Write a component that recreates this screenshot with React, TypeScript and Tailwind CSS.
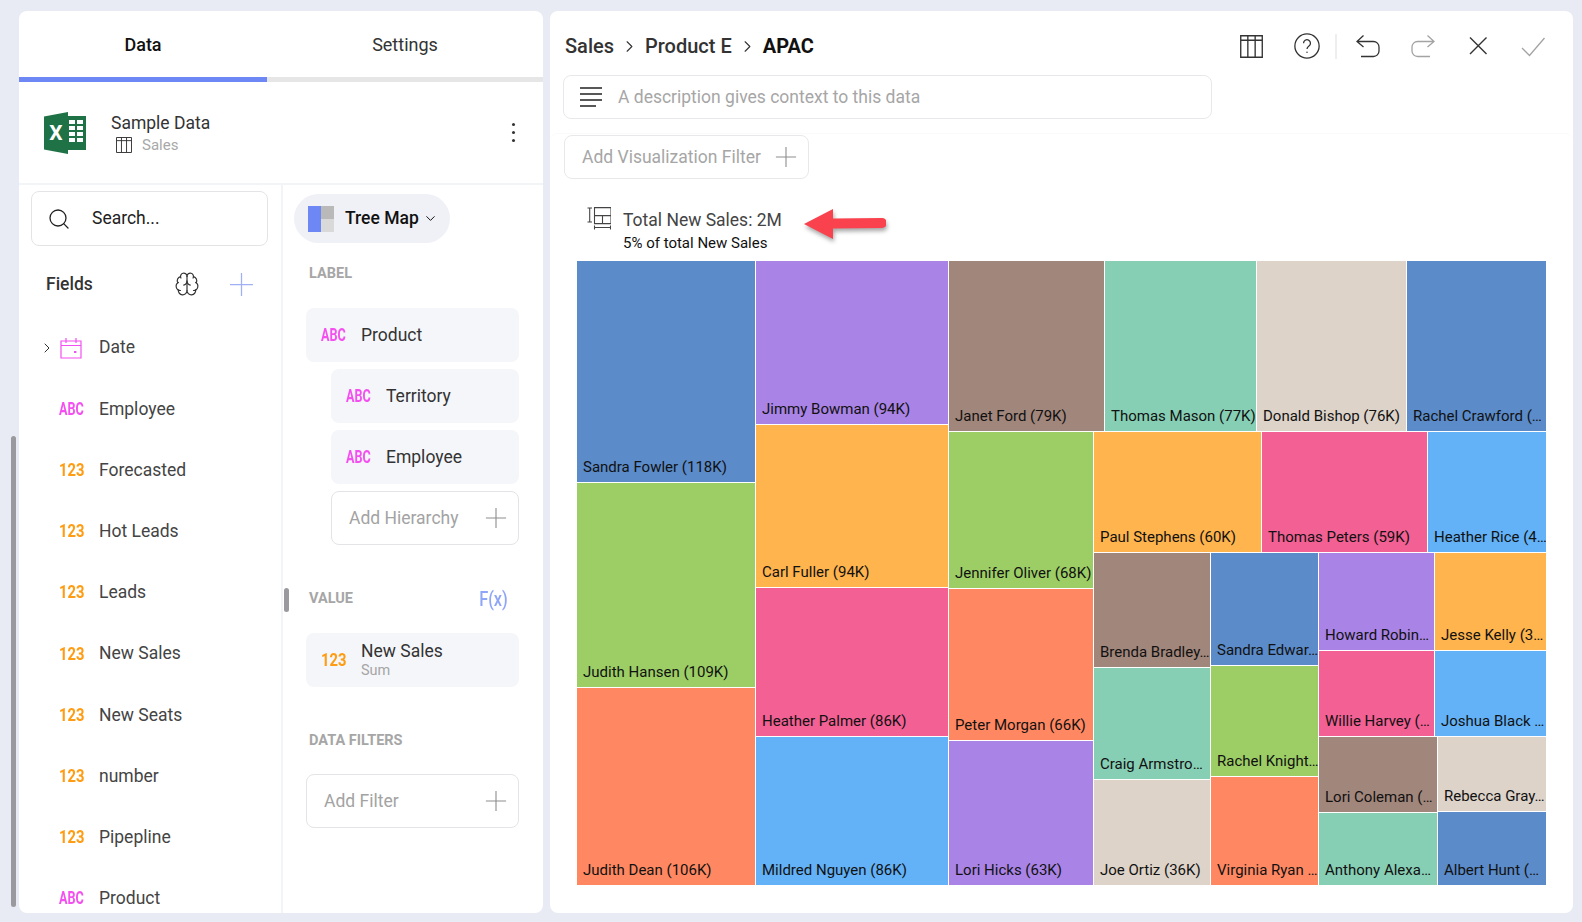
import type { ReactNode } from 'react'
import { Brain, ChevronDown, ChevronRight, Search } from 'lucide-react'

const Thin = ({ className = '' }: { className?: string }) => (
  <svg viewBox="0 0 24 24" fill="none" stroke="currentColor" strokeWidth="1.2" className={className}>
    <path d="M12 1v22M1 12h22" />
  </svg>
)

const TableIcon = ({ className = '' }: { className?: string }) => (
  <svg viewBox="0 0 22 22" fill="none" stroke="currentColor" strokeWidth="1.3" className={className}>
    <path d="M.7.7h20.6v20.6H.7zM.7 5h20.6M7.5.7v20.6M14.5.7v20.6" />
  </svg>
)

const ExcelLogo = () => (
  <svg viewBox="0 0 42 42" className="w-[42px] h-[42px] shrink-0">
    <rect x="20" y="4" width="22" height="34" fill="#1f7246" />
    <path d="M25 8h6v4h-6zM33 8h6v4h-6zM25 14h6v4h-6zM33 14h6v4h-6zM25 20h6v4h-6zM33 20h6v4h-6zM25 26h6v4h-6zM33 26h6v4h-6z" fill="#fff" />
    <path d="M0 4.5 24 0v42L0 37.5z" fill="#1f7246" />
    <text x="12" y="28" textAnchor="middle" fontSize="21" fontWeight="700" fontFamily="Roboto" fill="#fff">X</text>
  </svg>
)

const Badge = ({ kind }: { kind: 'abc' | 'num' }) => (
  <span className={`inline-block w-[26px] text-[18px] leading-none font-bold origin-left whitespace-nowrap ${kind === 'abc' ? 'text-[#f44ff0] scale-x-[0.7]' : 'text-[#ff9c12] scale-x-[0.82]'}`}>
    {kind === 'abc' ? 'ABC' : '123'}
  </span>
)

const fields: { name: string; kind: 'abc' | 'num' }[] = [
  { name: 'Employee', kind: 'abc' },
  { name: 'Forecasted', kind: 'num' },
  { name: 'Hot Leads', kind: 'num' },
  { name: 'Leads', kind: 'num' },
  { name: 'New Sales', kind: 'num' },
  { name: 'New Seats', kind: 'num' },
  { name: 'number', kind: 'num' },
  { name: 'Pipepline', kind: 'num' },
  { name: 'Product', kind: 'abc' },
]

const Pill = ({ name, kind, sub, className }: { name: string; kind: 'abc' | 'num'; sub?: string; className: string }) => (
  <div className={`flex items-center h-[54px] bg-[#f5f6fa] rounded-lg pl-[15px] ${className}`}>
    <Badge kind={kind} />
    <div className="ml-[14px]">
      <div className="text-[17.5px] leading-[21px] text-[#333]">{name}</div>
      {sub && <div className="text-[14.5px] leading-[17px] text-[#a5a5a5]">{sub}</div>}
    </div>
  </div>
)

const AddBox = ({ label, className }: { label: string; className: string }) => (
  <div className={`flex items-center justify-between h-[54px] border border-[#e4e4e6] rounded-lg pl-[17px] pr-[11px] text-[17.5px] text-[#a3a3a3] ${className}`}>
    {label}
    <Thin className="w-[22px] h-[22px] text-[#8d8d8d]" />
  </div>
)

const SectionLabel = ({ children, className = '' }: { children: ReactNode; className?: string }) => (
  <div className={`h-[18px] leading-[18px] text-[14.5px] font-bold text-[#a6a6a6] ${className}`}>{children}</div>
)

const Cell = ({ label, className }: { label: string; className: string }) => (
  <div className={`flex items-end min-h-0 min-w-0 overflow-hidden pl-[6px] pb-[5px] text-[15px] leading-[19px] whitespace-nowrap text-[#111] ${className}`}>
    {label}
  </div>
)

const blue = 'bg-[#5b8bc9]'
const purple = 'bg-[#a984e6]'
const brown = 'bg-[#a1867b]'
const teal = 'bg-[#87cfb4]'
const beige = 'bg-[#ddd3c8]'
const orange = 'bg-[#ffb44d]'
const pink = 'bg-[#f26094]'
const green = 'bg-[#9dce66]'
const coral = 'bg-[#ff8862]'
const sky = 'bg-[#63b2f7]'

const TreeMap = () => (
  <div className="flex gap-[1px] ml-[27px] mt-[9px] w-[969px] h-[624px]">
    <div className="flex flex-col gap-[1px] w-[178px]">
      <Cell label="Sandra Fowler (118K)" className={`h-[221px] ${blue}`} />
      <Cell label="Judith Hansen (109K)" className={`h-[204px] ${green}`} />
      <Cell label="Judith Dean (106K)" className={`flex-1 ${coral}`} />
    </div>
    <div className="flex flex-col gap-[1px] w-[192px]">
      <Cell label="Jimmy Bowman (94K)" className={`h-[163px] ${purple}`} />
      <Cell label="Carl Fuller (94K)" className={`h-[162px] ${orange}`} />
      <Cell label="Heather Palmer (86K)" className={`h-[148px] ${pink}`} />
      <Cell label="Mildred Nguyen (86K)" className={`flex-1 ${sky}`} />
    </div>
    <div className="flex flex-col gap-[1px] flex-1 min-w-0">
      <div className="flex gap-[1px] h-[170px]">
        <Cell label="Janet Ford (79K)" className={`w-[155px] ${brown}`} />
        <Cell label="Thomas Mason (77K)" className={`w-[151px] ${teal}`} />
        <Cell label="Donald Bishop (76K)" className={`w-[149px] ${beige}`} />
        <Cell label="Rachel Crawford (…" className={`flex-1 ${blue}`} />
      </div>
      <div className="flex gap-[1px] flex-1 min-h-0">
        <div className="flex flex-col gap-[1px] w-[144px]">
          <Cell label="Jennifer Oliver (68K)" className={`h-[156px] ${green}`} />
          <Cell label="Peter Morgan (66K)" className={`h-[151px] ${coral}`} />
          <Cell label="Lori Hicks (63K)" className={`flex-1 ${purple}`} />
        </div>
        <div className="flex flex-col gap-[1px] flex-1 min-w-0">
          <div className="flex gap-[1px] h-[120px]">
            <Cell label="Paul Stephens (60K)" className={`w-[167px] ${orange}`} />
            <Cell label="Thomas Peters (59K)" className={`w-[165px] ${pink}`} />
            <Cell label="Heather Rice (4…" className={`flex-1 ${sky}`} />
          </div>
          <div className="flex gap-[1px] flex-1 min-h-0">
            <div className="flex flex-col gap-[1px] w-[116px]">
              <Cell label="Brenda Bradley…" className={`h-[114px] ${brown}`} />
              <Cell label="Craig Armstro…" className={`h-[111px] ${teal}`} />
              <Cell label="Joe Ortiz (36K)" className={`flex-1 ${beige}`} />
            </div>
            <div className="flex flex-col gap-[1px] w-[107px]">
              <Cell label="Sandra Edwar…" className={`h-[112px] ${blue}`} />
              <Cell label="Rachel Knight…" className={`h-[110px] ${green}`} />
              <Cell label="Virginia Ryan …" className={`flex-1 ${coral}`} />
            </div>
            <div className="flex flex-col gap-[1px] flex-1 min-w-0">
              <div className="flex gap-[1px] h-[97px]">
                <Cell label="Howard Robin…" className={`w-[115px] ${purple}`} />
                <Cell label="Jesse Kelly (3…" className={`flex-1 ${orange}`} />
              </div>
              <div className="flex gap-[1px] h-[85px]">
                <Cell label="Willie Harvey (…" className={`w-[115px] ${pink}`} />
                <Cell label="Joshua Black …" className={`flex-1 ${sky}`} />
              </div>
              <div className="flex gap-[1px] flex-1 min-h-0">
                <div className="flex flex-col gap-[1px] w-[118px]">
                  <Cell label="Lori Coleman (…" className={`h-[75px] ${brown}`} />
                  <Cell label="Anthony Alexa…" className={`flex-1 ${teal}`} />
                </div>
                <div className="flex flex-col gap-[1px] flex-1 min-w-0">
                  <Cell label="Rebecca Gray…" className={`h-[74px] ${beige}`} />
                  <Cell label="Albert Hunt (…" className={`flex-1 ${blue}`} />
                </div>
              </div>
            </div>
          </div>
        </div>
      </div>
    </div>
  </div>
)

const LeftPanel = () => (
  <div className="w-[524px] h-full bg-white rounded-lg overflow-hidden flex flex-col">
    <div className="flex h-[66px] items-center text-[18px]">
      <div className="w-[248px] text-center font-medium text-[#111]">Data</div>
      <div className="flex-1 text-center text-[#333]">Settings</div>
    </div>
    <div className="flex h-[5px] bg-[#e6e6e6]">
      <div className="w-[248px] bg-[#6d87f5]" />
    </div>
    <div className="flex items-center h-[103px] border-b-2 border-[#f3f4f7] pl-[25px] pr-[28px]">
      <ExcelLogo />
      <div className="ml-[25px]">
        <div className="text-[17.5px] leading-[24px] text-[#333]">Sample Data</div>
        <div className="flex items-center text-[15px] leading-[20px] text-[#a8a8a8]">
          <TableIcon className="w-[16px] h-[16px] ml-[5px] mr-[10px] text-[#333]" />
          Sales
        </div>
      </div>
      <div className="ml-auto flex flex-col gap-[5px]">
        <span className="w-[3px] h-[3px] rounded-full bg-[#333]" />
        <span className="w-[3px] h-[3px] rounded-full bg-[#333]" />
        <span className="w-[3px] h-[3px] rounded-full bg-[#333]" />
      </div>
    </div>
    <div className="flex flex-1 min-h-0">
      <div className="w-[264px] border-r-2 border-[#f3f4f7] px-[12px] pt-[6px] overflow-hidden">
        <div className="flex items-center h-[55px] w-[237px] border border-[#e4e4e6] rounded-lg pl-[15px] text-[17.5px] text-[#222]">
          <Search className="w-[24px] h-[24px] mr-[21px]" strokeWidth={1.3} />
          Search...
        </div>
        <div className="flex items-center h-[44px] mt-[16px] pl-[15px] text-[17.5px] font-medium text-[#333]">
          Fields
          <Brain className="w-[26px] h-[26px] ml-auto text-[#333]" strokeWidth={1.1} />
          <Thin className="w-[25px] h-[25px] ml-[29px] mr-[15px] text-[#9fb0f5]" />
        </div>
        <div className="flex items-center h-[61.2px] mt-[11px] text-[17.5px] text-[#444]">
          <ChevronRight className="w-[16px] h-[16px] ml-[8px] text-[#333]" strokeWidth={1.5} />
          <svg viewBox="0 0 22 22" fill="none" stroke="#f44ff0" strokeWidth="1.2" className="w-[22px] h-[22px] ml-[5px] mr-[17px]">
            <path d="M1 4h20v17H1zM1 8.5h20M6 1v5M16 1v5" />
            <path d="M14 14h2.4v2H14z" fill="#f44ff0" stroke="none" />
          </svg>
          Date
        </div>
        {fields.map((f) => (
          <div key={f.name} className="flex items-center h-[61.2px] pl-[28px] text-[17.5px] text-[#444]">
            <Badge kind={f.kind} />
            <span className="ml-[14px]">{f.name}</span>
          </div>
        ))}
      </div>
      <div className="relative flex-1 pl-[23px] pr-[24px] pt-[9px]">
        <div className="absolute left-[1px] top-[403px] w-[5px] h-[24px] rounded-full bg-[#9a9a9e]" />
        <div className="flex items-center w-[156px] h-[49px] -ml-[12px] rounded-full bg-[#f0f1f7] pl-[14px] text-[17.5px] font-medium text-[#111]">
          <svg viewBox="0 0 26 26" className="w-[26px] h-[26px] mr-[11px]">
            <rect width="13" height="26" fill="#6d87f5" />
            <rect x="13" width="13" height="13" fill="#b9b9b9" />
            <rect x="13" y="13" width="13" height="13" fill="#d9d9d9" />
          </svg>
          Tree Map
          <ChevronDown className="w-[15px] h-[15px] ml-[4px]" strokeWidth={1.6} />
        </div>
        <SectionLabel className="mt-[22px] ml-[3px]">LABEL</SectionLabel>
        <Pill name="Product" kind="abc" className="mt-[25px]" />
        <Pill name="Territory" kind="abc" className="mt-[7px] ml-[25px]" />
        <Pill name="Employee" kind="abc" className="mt-[7px] ml-[25px]" />
        <AddBox label="Add Hierarchy" className="mt-[7px] ml-[25px]" />
        <div className="flex items-center justify-between mt-[45px] h-[18px]">
          <SectionLabel className="ml-[3px]">VALUE</SectionLabel>
          <span className="mr-[8px] text-[20px] font-medium text-[#8fa6f7] scale-x-[0.82]">F(x)</span>
        </div>
        <Pill name="New Sales" kind="num" sub="Sum" className="mt-[25px]" />
        <SectionLabel className="mt-[45px] ml-[3px]">DATA FILTERS</SectionLabel>
        <AddBox label="Add Filter" className="mt-[24px]" />
      </div>
    </div>
  </div>
)

const Toolbar = () => (
  <div className="flex items-center ml-auto text-[#333]">
    <TableIcon className="w-[23px] h-[23px]" />
    <svg viewBox="0 0 24 24" fill="none" stroke="currentColor" strokeWidth="1.2" className="w-[26px] h-[26px] ml-[31px]">
      <circle cx="12" cy="12" r="11.2" />
      <path d="M8.8 9.4a3.2 3.2 0 1 1 5 2.6c-1.2.8-1.8 1.4-1.8 2.8" />
      <circle cx="12" cy="17.8" r=".7" fill="currentColor" stroke="none" />
    </svg>
    <div className="w-[2px] h-[25px] bg-[#eeeeee] ml-[15px]" />
    <svg viewBox="0 0 24 24" fill="none" stroke="currentColor" strokeWidth="1.3" className="w-[24px] h-[24px] ml-[19px]">
      <path d="M7.5 1.5 1 7.5 7.5 13M1 7.5h16.5a5.5 5.5 0 0 1 5.5 5.5v4a5.5 5.5 0 0 1-5.5 5.5H5" />
    </svg>
    <svg viewBox="0 0 24 24" fill="none" stroke="#a3a3a3" strokeWidth="1.3" className="w-[24px] h-[24px] ml-[31px]">
      <path d="M16.5 1.5 23 7.5 16.5 13M23 7.5H6.5A5.5 5.5 0 0 0 1 13v4a5.5 5.5 0 0 0 5.5 5.5H19" />
    </svg>
    <svg viewBox="0 0 24 24" fill="none" stroke="currentColor" strokeWidth="1.4" className="w-[24px] h-[24px] ml-[31px]">
      <path d="M4 3.5 20.5 20M20.5 3.5 4 20" />
    </svg>
    <svg viewBox="0 0 24 24" fill="none" stroke="#a3a3a3" strokeWidth="1.3" className="w-[24px] h-[24px] ml-[31px]">
      <path d="M1 14l7.5 7.5L23.5 4" />
    </svg>
  </div>
)

const RightPanel = () => (
  <div className="relative w-[1023px] h-full bg-white rounded-lg overflow-hidden">
    <div className="flex items-center h-[44px] mt-[13px] pl-[15px] pr-[28px]">
      <div className="flex items-center text-[20px] font-medium text-[#333]">
        Sales
        <ChevronRight className="w-[19px] h-[19px] mx-[6px]" strokeWidth={1.4} />
        Product E
        <ChevronRight className="w-[19px] h-[19px] mx-[6px]" strokeWidth={1.4} />
        <span className="font-bold text-[#111]">APAC</span>
      </div>
      <Toolbar />
    </div>
    <div className="flex items-center w-[649px] h-[44px] ml-[13px] mt-[7px] border border-[#e8e8ea] rounded-lg pl-[16px] text-[17.5px] text-[#a6a6a6]">
      <svg viewBox="0 0 22 20" fill="none" stroke="#222" strokeWidth="1.3" className="w-[22px] h-[20px] mr-[16px]">
        <path d="M0 1h22M0 7h22M0 13h22M0 19h16" />
      </svg>
      A description gives context to this data
    </div>
    <div className="mt-[14px] pt-[1px] rounded-t-lg border-t border-[#fafafb]">
      <div className="flex items-center justify-between w-[245px] h-[44px] ml-[14px] border border-[#e8e8ea] rounded-lg pl-[17px] pr-[11px] text-[17.5px] text-[#a6a6a6]">
        Add Visualization Filter
        <Thin className="w-[22px] h-[22px] text-[#8d8d8d]" />
      </div>
      <div className="flex mt-[29px] ml-[37px] h-[44px]">
        <svg viewBox="0 0 24 25" fill="none" stroke="#444" strokeWidth="1.1" className="w-[24px] h-[25px] mr-[12px] -mt-[1px]">
          <path d="M7.5.6H24v16H7.5zM7.5 8.6H24M15.5 8.6v8M.5 1h4.5M.5 15h4.5M2.7 1v14M7.5 20.5h16M7.5 18.5v4M23.5 18.5v4" />
        </svg>
        <div>
          <div className="text-[17.5px] leading-[24px] text-[#444]">Total New Sales: 2M</div>
          <div className="text-[15px] leading-[18px] mt-[2px] text-[#111]">5% of total New Sales</div>
        </div>
      </div>
      <TreeMap />
    </div>
    <svg viewBox="0 0 82 32" className="absolute left-[254px] top-[198px] w-[82px] h-[32px] drop-shadow-[1px_3px_2px_rgba(0,0,0,0.35)]">
      <path d="M0 15 29 0v9.5l49-.5a5 5 0 0 1 0 10l-49 .5V30z" fill="#f9424e" />
    </svg>
  </div>
)

export default function App() {
  return (
    <div className="relative w-[1582px] h-[922px] overflow-hidden bg-[#e8ebf3] font-['Roboto',sans-serif]">
      <div className="absolute left-[11px] top-[436px] w-[5px] h-[471px] rounded-full bg-[#9a9a9e]" />
      <div className="flex gap-[7px] h-[902px] pt-0 mt-[11px] ml-[19px]">
        <LeftPanel />
        <RightPanel />
      </div>
    </div>
  )
}
